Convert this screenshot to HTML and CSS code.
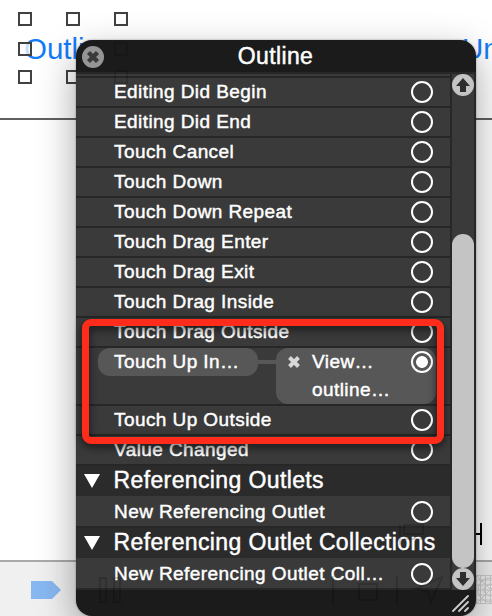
FILE: index.html
```html
<!DOCTYPE html>
<html lang="en">
<head>
<meta charset="utf-8">
<title>Outline</title>
<link rel="stylesheet" href="styles.css">
</head>
<body>
<div class="screen">
  <div class="canvas">
    <svg class="backdrop" width="492" height="616" viewBox="0 0 492 616">
      <rect width="492" height="616" fill="#fff"/>
      <path d="M0 119H492" stroke="#606060" stroke-width="2"/>
      <rect y="560" width="492" height="56" fill="#f0f0f0"/>
      <path d="M0 561H492" stroke="#aaa" stroke-width="2"/>
      <path d="M31 581H52L61 590L52 599H31Z" fill="#88b8f2"/>
      <path d="M481 523V545M466 534H481" stroke="#000" stroke-width="2" fill="none"/>
      <g stroke="#ccc" fill="none" stroke-width="1">
        <rect x="476.500" y="575.500" width="27" height="28"/>
        <path d="M476 580H492M476 585H492M476 590H492M476 595H492M476 600H492M480.500 575V604M485.500 575V604M490.500 575V604M476 575L492 591M476 604L492 588"/>
        <circle cx="490" cy="590" r="12"/><circle cx="490" cy="590" r="6"/>
      </g>
    </svg>
    <span class="link outline-link">Outline</span>
    <span class="link unwind-link">Un</span>
    <svg class="backdrop" width="492" height="616" viewBox="0 0 492 616">
      <g fill="#fff" fill-opacity=".75" stroke="#414141" stroke-width="2">
        <rect x="19" y="13" width="12" height="12"/><rect x="67" y="13" width="12" height="12"/><rect x="115" y="13" width="12" height="12"/>
        <rect x="19" y="43" width="12" height="12"/><rect x="19" y="71" width="12" height="12"/><rect x="67" y="71" width="12" height="12"/>
      </g>
    </svg>
  </div>

  <section class="panel">
    <header class="titlebar">
      <svg class="close" width="22" height="22" viewBox="0 0 22 22"><circle cx="11" cy="11" r="11" fill="#959595"/><path d="M6.500 6.500L15.500 15.500M15.500 6.500L6.500 15.500" stroke="#3a3a3a" stroke-width="4.400"/></svg>
      <h1>Outline</h1>
    </header>
    <div class="body">
      <div class="list">
        <div class="sliver"></div>
        <div class="row"><span>Editing Did Begin</span><i class="port"></i></div>
        <div class="row"><span>Editing Did End</span><i class="port"></i></div>
        <div class="row"><span>Touch Cancel</span><i class="port"></i></div>
        <div class="row"><span>Touch Down</span><i class="port"></i></div>
        <div class="row"><span>Touch Down Repeat</span><i class="port"></i></div>
        <div class="row"><span>Touch Drag Enter</span><i class="port"></i></div>
        <div class="row"><span>Touch Drag Exit</span><i class="port"></i></div>
        <div class="row"><span>Touch Drag Inside</span><i class="port"></i></div>
        <div class="row"><span>Touch Drag Outside</span><i class="port"></i></div>
        <div class="row connected">
          <div class="event">Touch Up In…</div>
          <div class="wire"></div>
          <div class="target">
            <svg class="remove" width="12" height="12" viewBox="0 0 12 12"><path d="M1.500 1.500L10.500 10.500M10.500 1.500L1.500 10.500" stroke="#d8d8d8" stroke-width="4"/></svg>
            <div class="names"><div>View…</div><div>outline…</div></div>
            <i class="port filled"></i>
          </div>
        </div>
        <div class="row"><span>Touch Up Outside</span><i class="port"></i></div>
        <div class="row"><span>Value Changed</span><i class="port"></i></div>
        <div class="group"><svg width="16" height="14" viewBox="0 0 16 14"><path d="M0 0H16L8 14Z" fill="#fff"/></svg><h2>Referencing Outlets</h2></div>
        <div class="row"><span>New Referencing Outlet</span><i class="port"></i></div>
        <div class="group"><svg width="16" height="14" viewBox="0 0 16 14"><path d="M0 0H16L8 14Z" fill="#fff"/></svg><h2>Referencing Outlet Collections</h2></div>
        <div class="row"><span>New Referencing Outlet Coll…</span><i class="port"></i></div>
      </div>
      <div class="track">
        <svg width="22" height="22" viewBox="0 0 22 22"><circle cx="11" cy="11" r="11" fill="#c4c4c4"/><path d="M11 4L18 12H14V18H8V12H4Z" fill="#2d2d2d"/></svg>
        <div class="thumb"></div>
        <svg width="22" height="22" viewBox="0 0 22 22"><circle cx="11" cy="11" r="11" fill="#c4c4c4"/><path d="M11 18L18 10H14V4H8V10H4Z" fill="#2d2d2d"/></svg>
      </div>
    </div>
    <footer class="footer"><svg width="18" height="17" viewBox="0 0 18 17"><path d="M1 16L16 1M7 16L16 7M13 16L16 13" stroke="#ccc" stroke-width="1.800" stroke-linecap="round"/></svg></footer>
    <svg class="ghost" width="400" height="576" viewBox="76 40 400 576" fill="none" stroke="#000" stroke-opacity=".16" stroke-width="2">
      <path d="M400 525V545M404 525H423V534H404ZM404 539H423M100 578h6v24h-6zM114 578h6v24h-6zM333 576V606M397 576V606M416 589L442 577L431 603L428 591ZM359 584h18v16h-18z"/>
      <g stroke-opacity=".14"><rect x="115" y="43" width="12" height="12"/><rect x="115" y="71" width="12" height="12"/></g>
    </svg>
  </section>
  <div class="highlight"></div>
</div>
</body>
</html>
```
FILE: styles.css
```css
* { box-sizing: border-box; }
body { margin: 0; background: #fff; font-family: "Liberation Sans", Arial, sans-serif; }
.screen { position: relative; width: 492px; height: 616px; overflow: hidden; padding: 40px 16px 0 76px; }
.canvas, .backdrop { position: absolute; left: 0; top: 0; }
.link { position: absolute; top: 32px; color: #147cf6; font-size: 29.5px; line-height: 34px; }
.outline-link { left: 24px; }
.unwind-link { left: 462px; }

.panel {
  position: relative; width: 400px; height: 576px; overflow: hidden;
  border-radius: 16px; background: #1b1b1b; color: #fff;
  box-shadow: 0 14px 38px rgba(0,0,0,.36), 0 0 2px rgba(0,0,0,.4);
}
.titlebar { display: flex; align-items: center; height: 32px; padding-left: 6px; }
.close { margin-top: 2px; }
h1, h2 { margin: 0; font-weight: 400; font-size: 23px; letter-spacing: .38px; -webkit-text-stroke: .45px #fff; white-space: nowrap; }
h1 { flex: 1; padding-right: 29px; text-align: center; line-height: 32px; }
.body { display: flex; height: 518px; background: #272727; border-top: 2px solid #272727; padding-right: 2px; }
.list { width: 374px; margin-right: 2px; }
.sliver { height: 2px; background: #3b3b3b; }
.row {
  display: flex; align-items: center; justify-content: space-between; height: 30px;
  padding: 0 17px 0 38px; border-top: 2px solid #272727; background: #3a3a3a;
  font-size: 19px; line-height: 28px; letter-spacing: .42px; white-space: nowrap; -webkit-text-stroke: .45px #fff;
}
.group + .row { border-top: 0; padding-top: 2px; }
.port { display: block; flex: none; width: 22px; height: 22px; border: 2px solid #fff; border-radius: 50%; }
.filled { background: radial-gradient(circle, #fff 5.5px, transparent 6.3px); }
.connected { height: 58px; align-items: flex-start; justify-content: flex-start; padding: 0 0 0 22px; }
.event { width: 160px; height: 28px; padding-left: 16px; border-radius: 12px; background: #575757; }
.wire { width: 18px; height: 4px; margin-top: 12px; background: #575757; }
.target { display: flex; width: 160px; height: 56px; padding: 0 3px 0 12px; border-radius: 12px; background: #575757; }
.remove { margin-top: 8px; }
.names { flex: 1; margin-left: 12px; }
.target .port { margin-top: 3px; }
.group { display: flex; align-items: center; height: 32px; padding-left: 8px; background: #2b2b2b; border-top: 2px solid #272727; }
.group h2 { margin-left: 13.5px; line-height: 28px; padding-bottom: 2px; }
.track { display: flex; flex-direction: column; width: 22px; background: #3a3a3a; }
.track svg { flex: none; display: block; }
.thumb { flex: 1; margin-top: 138px; border-radius: 11px; background: #c4c4c4; }
.footer { display: flex; justify-content: flex-end; padding: 5px 6px 0 0; }
.ghost { position: absolute; left: 0; top: 0; }
.highlight {
  position: absolute; left: 82px; top: 319px; width: 362px; height: 125px;
  border: 7px solid #ff2b1b; border-radius: 9px;
  filter: drop-shadow(0 3px 4px rgba(0,0,0,.65));
}
```
